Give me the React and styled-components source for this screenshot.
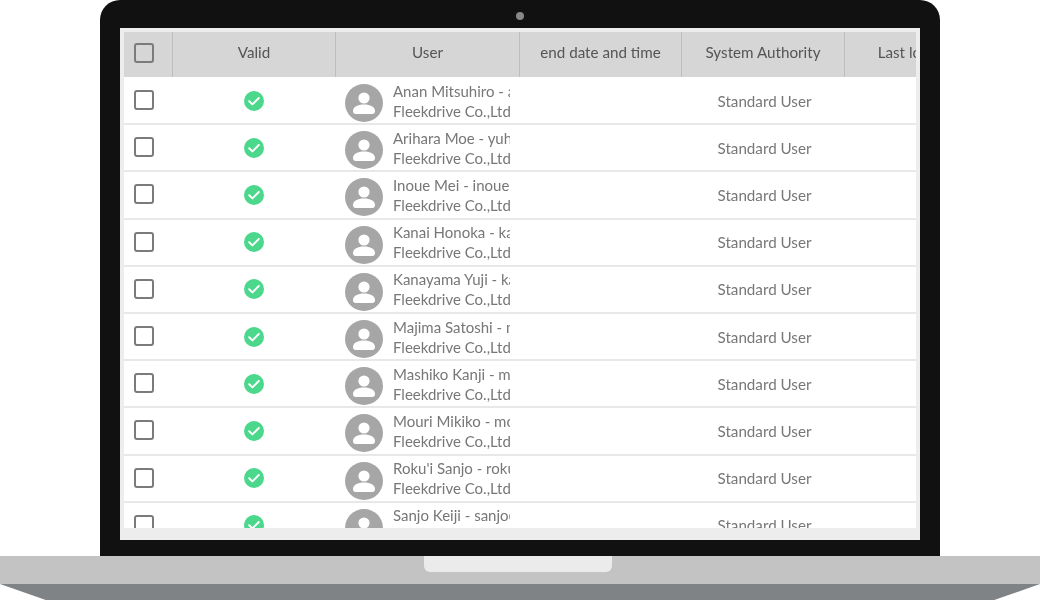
import React from "react";
import styled, { createGlobalStyle } from "styled-components";

const GlobalStyle = createGlobalStyle`
  html, body {
    margin: 0;
    background: #fff;
  }
  * {
    box-sizing: border-box;
  }
`;

const COLUMNS = "48px 163px 184px 162px 163px 163px";

const users = [
  "Anan Mitsuhiro - anan@fleekdrive.com",
  "Arihara Moe - yuhara@fleekdrive.com",
  "Inoue Mei - inoue@fleekdrive.com",
  "Kanai Honoka - kanai@fleekdrive.com",
  "Kanayama Yuji - kanayama@fleekdrive.com",
  "Majima Satoshi - majima@fleekdrive.com",
  "Mashiko Kanji - mashiko@fleekdrive.com",
  "Mouri Mikiko - mouri@fleekdrive.com",
  "Roku'i Sanjo - rokui@fleekdrive.com",
  "Sanjo Keiji - sanjo@fleekdrive.com",
];

const Page = styled.div`
  width: 1040px;
  height: 600px;
  overflow: hidden;
  font-family: Lato, "Open Sans", sans-serif;
`;

const Lid = styled.div`
  height: 556px;
  margin: 0 100px;
  padding: 28px 20px 16px;
  background: #111;
  border-radius: 20px 20px 0 0;
  position: relative;
`;

const Camera = styled.div`
  position: absolute;
  top: 12px;
  left: 416px;
  width: 8px;
  height: 8px;
  border-radius: 50%;
  background: #888;
`;

const Screen = styled.div`
  height: 512px;
  padding: 4px 4px 12px;
  background: #ecedec;
`;

const Table = styled.div`
  height: 496px;
  overflow: hidden;
  background: #fff;
  filter: blur(0.35px);
`;

const HeaderRow = styled.div`
  display: grid;
  grid-template-columns: ${COLUMNS};
  height: 45px;
  margin-bottom: 1px;
  background: #d6d6d6;
`;

const HeaderCell = styled.div`
  display: flex;
  align-items: center;
  justify-content: center;
  padding-bottom: 5px;
  border-left: 1px solid #bdbdbd;
  color: #555;
  font-size: 15.2px;
  white-space: nowrap;
  overflow: hidden;
`;

const Row = styled.div`
  display: grid;
  grid-template-columns: ${COLUMNS};
  height: 47.2px;
  border-bottom: 2px solid #e8e8e8;
`;

const Cell = styled.div`
  display: flex;
  align-items: center;
  justify-content: center;
  padding-left: ${(p) => p.$shift || 0}px;
  min-width: 0;
  color: #777;
  font-size: 15.2px;
`;

const UserCell = styled.div`
  display: flex;
  align-items: center;
  gap: 10px;
  min-width: 0;
  padding: 0 9px 0 10px;
`;

const Avatar = styled.svg`
  flex: none;
  width: 38px;
  height: 38px;
  margin-top: 5px;
`;

const UserText = styled.div`
  min-width: 0;
  overflow: hidden;
  white-space: nowrap;
  color: #777;
  font-size: 15px;
  line-height: 20px;
`;

const Checkbox = styled.div`
  width: 20px;
  height: 20px;
  border: 2px solid #7b7b7b;
  border-radius: 3px;
  background: ${(p) => (p.$head ? "#d6d6d6" : "#fff")};
`;

const CheckCell = styled.div`
  display: flex;
  align-items: center;
  padding-left: 10px;
  padding-bottom: ${(p) => (p.$head ? "3px" : "1px")};
`;

const ValidIcon = styled.svg`
  width: 20px;
  height: 20px;
`;

const Base = styled.div`
  height: 28px;
  background: #c3c3c3;
  display: flex;
  justify-content: center;
`;

const Notch = styled.div`
  width: 188px;
  height: 16px;
  margin-left: -4px;
  background: #ebebeb;
  border-radius: 0 0 6px 6px;
`;

const Foot = styled.div`
  height: 16px;
  background: #808386;
  clip-path: polygon(0 0, 100% 0, 95.6% 100%, 4.4% 100%);
`;

function AvatarIcon() {
  return (
    <Avatar viewBox="0 0 38 38">
      <circle cx="19" cy="19" r="19" fill="#a6a6a6" />
      <circle cx="19" cy="14" r="5.6" fill="#fff" />
      <path
        d="M8 27c0-4.200 4.800-6.400 11-6.400S30 22.800 30 27c0 1.800-1 3-2.800 3H10.800C9 30 8 28.800 8 27z"
        fill="#fff"
      />
    </Avatar>
  );
}

function CheckIcon() {
  return (
    <ValidIcon viewBox="0 0 20 20">
      <circle cx="10" cy="10" r="10" fill="#4bd78c" />
      <path
        d="M5.200 10.300l3.200 3.100 6.400-6.400"
        fill="none"
        stroke="#fff"
        strokeWidth="2"
        strokeLinecap="round"
        strokeLinejoin="round"
      />
    </ValidIcon>
  );
}

export default function App() {
  return (
    <Page>
      <GlobalStyle />
      <Lid>
        <Camera />
        <Screen>
          <Table>
            <HeaderRow>
              <CheckCell $head>
                <Checkbox $head />
              </CheckCell>
              <HeaderCell>Valid</HeaderCell>
              <HeaderCell>User</HeaderCell>
              <HeaderCell>end date and time</HeaderCell>
              <HeaderCell>System Authority</HeaderCell>
              <HeaderCell>Last login date</HeaderCell>
            </HeaderRow>
            {users.map((name) => (
              <Row key={name}>
                <CheckCell>
                  <Checkbox />
                </CheckCell>
                <Cell>
                  <CheckIcon />
                </Cell>
                <UserCell>
                  <AvatarIcon />
                  <UserText>
                    {name}
                    <br />
                    Fleekdrive Co.,Ltd
                  </UserText>
                </UserCell>
                <Cell />
                <Cell $shift={4}>Standard User</Cell>
                <Cell />
              </Row>
            ))}
          </Table>
        </Screen>
      </Lid>
      <Base>
        <Notch />
      </Base>
      <Foot />
    </Page>
  );
}
